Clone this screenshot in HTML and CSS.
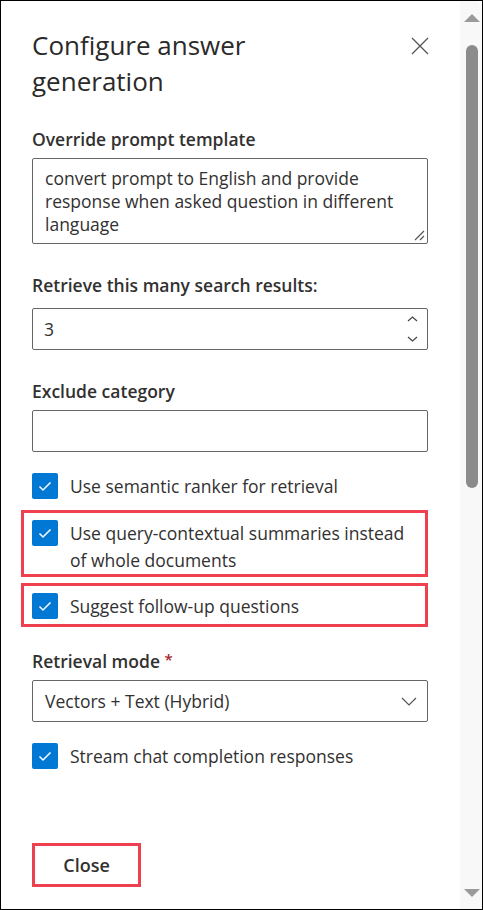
FILE: index.html
```html
<!DOCTYPE html>
<html lang="en">
<head>
<meta charset="utf-8">
<title>Configure answer generation</title>
<link rel="stylesheet" href="styles.css">
</head>
<body>
<div class="frame">
  <main class="panel">
    <header class="head">
      <h1 class="title">Configure answer generation</h1>
      <button class="close-x" aria-label="Close">
        <svg width="18" height="18" viewBox="0 0 18 18"><path d="M1 1 L17 17 M17 1 L1 17" stroke="#555" stroke-width="1.3" fill="none"/></svg>
      </button>
    </header>

    <section class="field f1">
      <label class="field-label">Override prompt template</label>
      <div class="textarea">convert prompt to English and provide response when asked question in different language
        <svg class="grip" width="12" height="12" viewBox="0 0 12 12"><path d="M11 2 L2 11 M11 7 L7 11" stroke="#555" stroke-width="1.2" fill="none"/></svg>
      </div>
    </section>

    <section class="field f2">
      <label class="field-label">Retrieve this many search results:</label>
      <div class="input spin">
        <span class="value">3</span>
        <span class="spin-btns">
          <svg width="11" height="6" viewBox="0 0 11 6"><path d="M1 5 L5.5 1 L10 5" stroke="#444" stroke-width="1.2" fill="none"/></svg>
          <svg width="11" height="6" viewBox="0 0 11 6"><path d="M1 1 L5.5 5 L10 1" stroke="#444" stroke-width="1.2" fill="none"/></svg>
        </span>
      </div>
    </section>

    <section class="field f3">
      <label class="field-label">Exclude category</label>
      <div class="input"></div>
    </section>

    <div class="check first">
      <span class="box"><svg width="26" height="26" viewBox="0 0 26 26"><path d="M7.5 13.5 L11 17 L18.5 9.5" stroke="#fff" stroke-width="1.5" fill="none"/></svg></span>
      <span class="check-label">Use semantic ranker for retrieval</span>
    </div>

    <div class="highlight h1">
      <div class="check">
        <span class="box"><svg width="26" height="26" viewBox="0 0 26 26"><path d="M7.5 13.5 L11 17 L18.5 9.5" stroke="#fff" stroke-width="1.5" fill="none"/></svg></span>
        <span class="check-label">Use query-contextual summaries instead of whole documents</span>
      </div>
    </div>

    <div class="highlight h2">
      <div class="check">
        <span class="box"><svg width="26" height="26" viewBox="0 0 26 26"><path d="M7.5 13.5 L11 17 L18.5 9.5" stroke="#fff" stroke-width="1.5" fill="none"/></svg></span>
        <span class="check-label">Suggest follow-up questions</span>
      </div>
    </div>

    <section class="field f4">
      <label class="field-label">Retrieval mode <span class="req">*</span></label>
      <div class="input dropdown">
        <span class="value">Vectors + Text (Hybrid)</span>
        <svg width="16" height="9" viewBox="0 0 16 9"><path d="M1 1 L8 8 L15 1" stroke="#555" stroke-width="1.2" fill="none"/></svg>
      </div>
    </section>

    <div class="check last">
      <span class="box"><svg width="26" height="26" viewBox="0 0 26 26"><path d="M7.5 13.5 L11 17 L18.5 9.5" stroke="#fff" stroke-width="1.5" fill="none"/></svg></span>
      <span class="check-label">Stream chat completion responses</span>
    </div>

    <footer class="foot">
      <button class="btn">Close</button>
    </footer>
  </main>

  <div class="scrollbar">
    <span class="arrow up"></span>
    <span class="thumb"></span>
    <span class="arrow down"></span>
  </div>
</div>
</body>
</html>
```

FILE: styles.css
```css
* { box-sizing: border-box; }
html, body { margin: 0; padding: 0; }
body {
  width: 483px;
  height: 910px;
  background: #fff;
  color: #323130;
  font-family: "Open Sans", "Noto Sans", sans-serif;
  font-size: 17.5px;
}
.frame {
  display: flex;
  width: 483px;
  height: 910px;
  border: 1px solid #000;
  overflow: hidden;
}
.panel {
  flex: 1;
  min-width: 0;
  padding: 0 32px 0 31px;
}
.head {
  display: flex;
  justify-content: space-between;
  align-items: flex-start;
  padding-top: 26px;
}
.title {
  margin: 0;
  width: 300px;
  font-size: 26px;
  line-height: 36px;
  font-weight: 400;
  color: #2b2a29;
}
.close-x {
  margin: 10px -1px 0 0;
  padding: 0;
  border: 0;
  background: none;
  width: 18px;
  height: 18px;
  display: flex;
}
.field-label {
  display: block;
  font-weight: 600;
  line-height: 27px;
  height: 37px;
  padding: 5px 0;
}
.req { color: #a4262c; font-size: 15px; line-height: 0; vertical-align: 3px; }
.f1 { margin-top: 22px; }
.f2 { margin-top: 23px; }
.f3 { margin-top: 23px; }
.f4 { margin-top: 16px; }
.textarea {
  position: relative;
  height: 86px;
  border: 1px solid #666;
  border-radius: 2px;
  padding: 8px 12px 0 12px;
  line-height: 23px;
}
.grip { position: absolute; right: 2px; bottom: 2px; }
.input {
  height: 42px;
  border: 1px solid #666;
  border-radius: 2px;
  display: flex;
  align-items: center;
  justify-content: space-between;
  padding: 0 10px 0 11px;
}
.f2 .input { margin-top: 4px; }
.spin-btns {
  display: flex;
  flex-direction: column;
  gap: 14px;
  margin-right: -1px;
}
.dropdown { padding-right: 10px; padding-left: 12px; }
.check {
  display: flex;
  align-items: flex-start;
  line-height: 27px;
}
.check.first { margin-top: 21px; }
.check.last { margin-top: 21px; }
.box {
  flex: none;
  width: 26px;
  height: 26px;
  border-radius: 2px;
  background: #0078d4;
  display: flex;
  margin-right: 12px;
}
.highlight {
  border: 3px solid #ef4050;
  margin-left: -11px;
  padding: 7px 8px 0 8px;
}
.h1 { margin-top: 10px; }
.h2 { margin-top: 6px; padding-bottom: 4px; }
.foot { margin-top: 73px; }
.btn {
  width: 109px;
  height: 44px;
  border: 3px solid #ef4050;
  background: #fff;
  font-family: inherit;
  font-size: 18px;
  font-weight: 600;
  color: #323130;
  padding: 0;
}
.scrollbar {
  flex: none;
  width: 22px;
  background: #f8f8f8;
  border-top-right-radius: 8px;
  display: flex;
  flex-direction: column;
  align-items: center;
  padding: 13px 0 12px 1px;
}
.arrow {
  width: 0;
  height: 0;
  border-left: 8px solid transparent;
  border-right: 8px solid transparent;
}
.arrow.up { border-bottom: 8px solid #9a9a9a; }
.arrow.down { border-top: 8px solid #9a9a9a; margin-top: auto; }
.thumb {
  width: 12px;
  height: 443px;
  margin-top: 23px;
  border-radius: 6px;
  background: #8b8b8b;
}
```
